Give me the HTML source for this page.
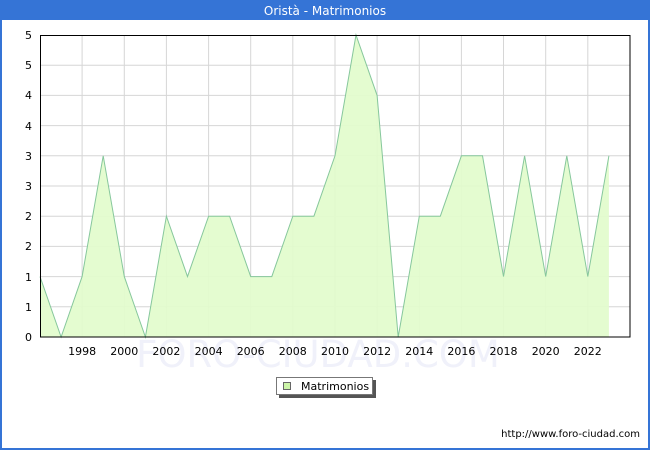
<!DOCTYPE html>
<html><head><meta charset="utf-8"><style>
html,body{margin:0;padding:0;background:#fff;}
body{width:650px;height:450px;overflow:hidden;font-family:"DejaVu Sans","Liberation Sans",sans-serif;}
</style></head><body>
<svg width="650" height="450" xmlns="http://www.w3.org/2000/svg" font-family="DejaVu Sans, Liberation Sans, sans-serif">
<rect x="0" y="0" width="650" height="450" fill="#fff"/>
<rect x="1" y="1" width="648" height="448" fill="none" stroke="#3574d6" stroke-width="2"/>
<rect x="0" y="0" width="650" height="20" fill="#3574d6"/>
<text x="325" y="15" text-anchor="middle" font-size="12" fill="#fff">Oristà - Matrimonios</text>
<text x="318" y="367" text-anchor="middle" font-size="37" fill="#f0f1fa">FORO-CIUDAD.COM</text>
<g stroke="#d6d6d6" stroke-width="1">
<line x1="40" x2="630" y1="65.2" y2="65.2"/><line x1="40" x2="630" y1="95.4" y2="95.4"/>
<line x1="40" x2="630" y1="125.6" y2="125.6"/><line x1="40" x2="630" y1="155.8" y2="155.8"/>
<line x1="40" x2="630" y1="186" y2="186"/><line x1="40" x2="630" y1="216.2" y2="216.2"/>
<line x1="40" x2="630" y1="246.4" y2="246.4"/><line x1="40" x2="630" y1="276.6" y2="276.6"/>
<line x1="40" x2="630" y1="306.8" y2="306.8"/>
<line y1="35" y2="337" x1="82.1" x2="82.1"/><line y1="35" y2="337" x1="124.3" x2="124.3"/>
<line y1="35" y2="337" x1="166.4" x2="166.4"/><line y1="35" y2="337" x1="208.6" x2="208.6"/>
<line y1="35" y2="337" x1="250.7" x2="250.7"/><line y1="35" y2="337" x1="292.8" x2="292.8"/>
<line y1="35" y2="337" x1="335" x2="335"/><line y1="35" y2="337" x1="377.1" x2="377.1"/>
<line y1="35" y2="337" x1="419.3" x2="419.3"/><line y1="35" y2="337" x1="461.4" x2="461.4"/>
<line y1="35" y2="337" x1="503.5" x2="503.5"/><line y1="35" y2="337" x1="545.7" x2="545.7"/>
<line y1="35" y2="337" x1="587.8" x2="587.8"/>
</g>
<polygon fill="#e2fccc" fill-opacity="0.92" points="40,337 40,276.6 61.1,337 82.1,276.6 103.2,155.8 124.3,276.6 145.4,337 166.4,216.2 187.5,276.6 208.6,216.2 229.6,216.2 250.7,276.6 271.8,276.6 292.8,216.2 313.9,216.2 335,155.8 356,35 377.1,95.4 398.2,337 419.3,216.2 440.3,216.2 461.4,155.8 482.5,155.8 503.5,276.6 524.6,155.8 545.7,276.6 566.8,155.8 587.8,276.6 608.9,155.8 608.9,337"/>
<polyline fill="none" stroke="#86c79c" stroke-width="1" points="40,276.6 61.1,337 82.1,276.6 103.2,155.8 124.3,276.6 145.4,337 166.4,216.2 187.5,276.6 208.6,216.2 229.6,216.2 250.7,276.6 271.8,276.6 292.8,216.2 313.9,216.2 335,155.8 356,35 377.1,95.4 398.2,337 419.3,216.2 440.3,216.2 461.4,155.8 482.5,155.8 503.5,276.6 524.6,155.8 545.7,276.6 566.8,155.8 587.8,276.6 608.9,155.8"/>
<rect x="40.5" y="35.5" width="589.5" height="301.5" fill="none" stroke="#000" stroke-width="1"/>
<g font-size="11" fill="#000" text-anchor="end">
<text x="32" y="39">5</text><text x="32" y="69">5</text><text x="32" y="99">4</text>
<text x="32" y="130">4</text><text x="32" y="160">3</text><text x="32" y="190">3</text>
<text x="32" y="220">2</text><text x="32" y="250">2</text><text x="32" y="281">1</text>
<text x="32" y="311">1</text><text x="32" y="341">0</text>
</g>
<g font-size="11" fill="#000" text-anchor="middle">
<text x="82.1" y="355">1998</text><text x="124.3" y="355">2000</text><text x="166.4" y="355">2002</text>
<text x="208.6" y="355">2004</text><text x="250.7" y="355">2006</text><text x="292.8" y="355">2008</text>
<text x="335" y="355">2010</text><text x="377.1" y="355">2012</text><text x="419.3" y="355">2014</text>
<text x="461.4" y="355">2016</text><text x="503.5" y="355">2018</text><text x="545.7" y="355">2020</text>
<text x="587.8" y="355">2022</text>
</g>
<rect x="279" y="380" width="97" height="18" fill="#555"/>
<rect x="276.5" y="377.5" width="96" height="17" fill="#fff" stroke="#777"/>
<rect x="283.5" y="382.5" width="7" height="7" fill="#ccf5a8" stroke="#666"/>
<text x="301" y="390" font-size="11" fill="#000">Matrimonios</text>
<text x="640" y="437" text-anchor="end" font-size="10" fill="#000">http://www.foro-ciudad.com</text>
</svg>
</body></html>
